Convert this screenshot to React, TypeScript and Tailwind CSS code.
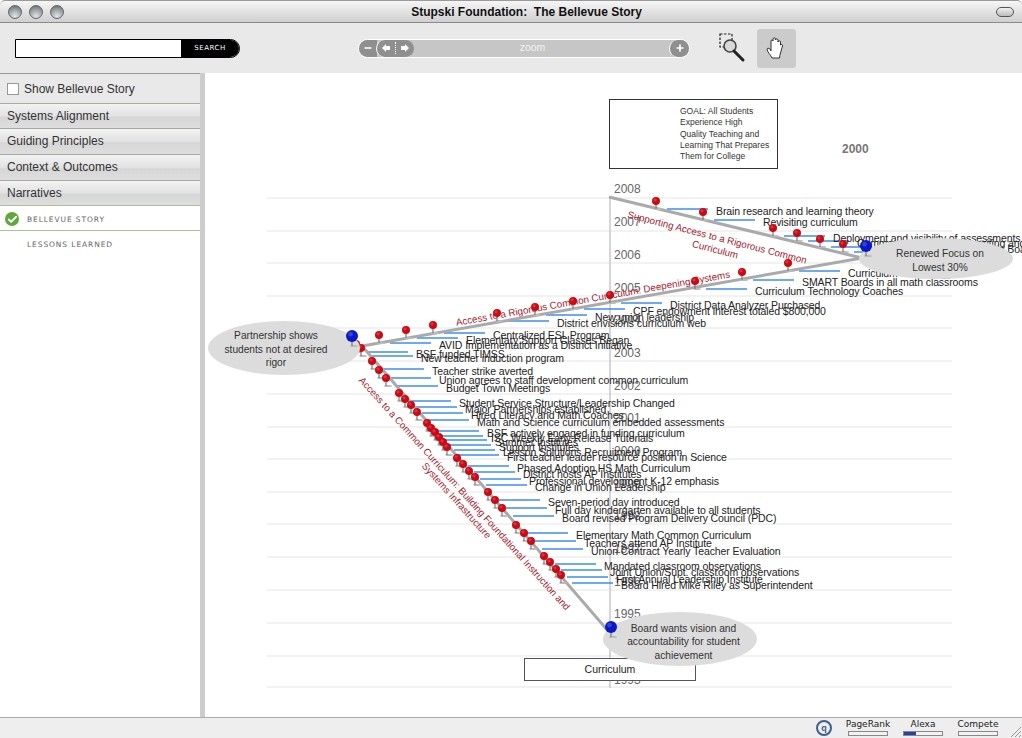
import { Check, Minus, Plus } from "lucide-react"

const gridRows = [198, 231, 263, 296, 328, 361, 394, 427, 459, 492, 524, 557, 590, 623, 656, 687]

const years: [string, number][] = [
  ["2008", 189],
  ["2007", 222],
  ["2006", 255],
  ["2005", 288],
  ["2004", 320],
  ["2003", 353],
  ["2002", 386],
  ["2001", 418],
  ["2000", 451],
  ["1999", 484],
  ["1998", 516],
  ["1997", 549],
  ["1996", 582],
  ["1995", 614],
  ["1993", 680],
]

// pin head x, pin head y, label. connector and label hang off the pin
const events: [number, number, string][] = [
  [656, 201, "Brain research and learning theory"],
  [703, 212, "Revisiting curriculum"],
  [773, 228, "Deployment and visibility of assessments"],
  [797, 233, "Common assessments in writing and rubrics"],
  [820, 239, "Data team review of results Board"],
  [843, 244, "Focus on lowest 30%"],
  [788, 263, "Curriculum Technology"],
  [742, 272, "SMART Boards in all math classrooms"],
  [695, 281, "Curriculum Technology Coaches"],
  [610, 295, "District Data Analyzer Purchased"],
  [573, 301, "CPF endowment interest totaled $800,000"],
  [535, 307, "New union leadership"],
  [497, 313, "District envisions curriculum web"],
  [433, 325, "Centralized ESL Program"],
  [406, 330, "Elementary Support Classes Began"],
  [379, 335, "AVID Implementation as a District Initiative"],
  [356, 344, "BSF funded TIMSS"],
  [361, 348, "New teacher induction program"],
  [372, 361, "Teacher strike averted"],
  [379, 370, "Union agrees to staff development common curriculum"],
  [386, 378, "Budget Town Meetings"],
  [399, 393, "Student Service Structure/Leadership Changed"],
  [405, 399, "Major Partnerships established"],
  [411, 405, "Hired Literacy and Math Coaches"],
  [417, 412, "Math and Science curriculum embedded assessments"],
  [427, 423, "BSF actively engaged in funding curriculum"],
  [431, 428, "ISC Weekly Early Release Tutorials"],
  [435, 432, "Summer Institutes"],
  [439, 437, "Support Institutes"],
  [443, 442, "Lesson Solutions Recruitment Program"],
  [447, 447, "First teacher leader resource position in Science"],
  [457, 458, "Phased Adoption HS Math Curriculum"],
  [463, 464, "District hosts AP Institutes"],
  [469, 471, "Professional development K-12 emphasis"],
  [475, 477, "Change in Union Leadership"],
  [488, 492, "Seven-period day introduced"],
  [495, 500, "Full day kindergarten available to all students"],
  [502, 508, "Board revised Program Delivery Council (PDC)"],
  [516, 525, "Elementary Math Common Curriculum"],
  [524, 533, "Teachers attend AP Institute"],
  [531, 541, "Union Contract Yearly Teacher Evaluation"],
  [544, 556, "Mandated classroom observations"],
  [550, 562, "Joint Union/Supt. classroom observations"],
  [556, 569, "First Annual Leadership Institute"],
  [561, 575, "Board Hired Mike Riley as Superintendent"],
]

const branchTitles: [string, number, number, number][] = [
  ["Supporting Access to a Rigorous Common", 717, 238, 14.5],
  ["Curriculum", 715, 250, 14.5],
  ["Access to a Rigorous Common Curriculum: Deepening Systems", 593, 299, -10],
  ["Access to a Common Curriculum: Building Foundational Instruction and", 464, 494, 48],
  ["Systems Infrastructure", 456, 501, 48],
]

const navRows: [string, string][] = [
  ["Systems Alignment", "h-[25px]"],
  ["Guiding Principles", "h-[26px] pb-[1px]"],
  ["Context & Outcomes", "h-[26px] pb-[1px]"],
  ["Narratives", "h-[25px]"],
]

// chart coordinates below are page pixels, the canvas starts at 205,73
const X0 = 205
const Y0 = 73

function Pin({ x, y, color, r }: { x: number; y: number; color: string; r: number }) {
  return (
    <g>
      <ellipse cx={x + 2} cy={y + r + 4} rx={4} ry={1} fill="#bbbbbb" />
      <line x1={x} y1={y} x2={x} y2={y + r + 4} stroke="#777777" strokeWidth={1.2} />
      <circle cx={x} cy={y} r={r} fill={color} />
      <circle cx={x - r * 0.25} cy={y - r * 0.3} r={r * 0.4} fill="#ffffff" opacity={0.18} />
    </g>
  )
}

function Bubble({ x, y, w, h, lines, inset }: { x: number; y: number; w: number; h: number; lines: string[]; inset: string }) {
  return (
    <div
      className={`absolute flex flex-col items-center justify-center rounded-[50%] bg-[#dcdcdc] text-center text-[10.2px] leading-[13.5px] text-[#333333] ${inset}`}
      style={{ left: x - X0, top: y - Y0, width: w, height: h }}
    >
      {lines.map((line) => (
        <span key={line}>{line}</span>
      ))}
    </div>
  )
}

function MeterBar({ label, fill }: { label: string; fill: number }) {
  return (
    <div className="flex w-10 flex-col items-center">
      <span className="font-['DejaVu_Sans'] text-[9px] leading-[13px] text-[#222222]">{label}</span>
      <div className="h-[5px] w-10 border border-[#888888] bg-[#f2f2f2]">
        <div className="h-full bg-[#2b3fa0]" style={{ width: `${fill}%` }} />
      </div>
    </div>
  )
}

function TrafficLight() {
  return <div className="size-[14px] rounded-full border border-[#666666] bg-[radial-gradient(circle_at_50%_85%,#e2e6ea_0%,#a4a9ae_50%,#5d6367_100%)]" />
}

export default function App() {
  return (
    <div className="flex h-[738px] w-[1022px] flex-col overflow-hidden bg-white font-['Liberation_Sans',Arial,sans-serif]">
      <header className="relative flex h-[23px] shrink-0 items-center justify-center rounded-t-[5px] border-t border-b border-t-[#9a9a9a] border-b-[#8a8a8a] bg-[linear-gradient(#f6f6f6,#cfcfcf)] pl-[31px]">
        <div className="absolute left-[8px] top-[4px] flex gap-[7px]">
          <TrafficLight />
          <TrafficLight />
          <TrafficLight />
        </div>
        <span className="whitespace-pre text-[12px] font-bold text-[#111111]">Stupski Foundation:  The Bellevue Story</span>
        <div className="absolute right-[8px] top-[6px] h-[10px] w-[18px] rounded-full border border-[#555555] bg-[linear-gradient(#f0f0f0,#bbbbbb)]" />
      </header>

      <div className="flex h-[50px] shrink-0 items-center bg-[#e9e9e9]">
        <div className="ml-[15px] flex h-[19px] w-[225px] items-stretch overflow-hidden rounded-r-full border border-black bg-white">
          <input className="min-w-0 flex-1 bg-white" aria-label="Search" />
          <div className="flex w-[58px] items-center justify-center bg-black font-['DejaVu_Sans'] text-[7px] tracking-[0.5px] text-white">SEARCH</div>
        </div>

        <div className="ml-[118px] flex h-[19px] w-[332px] items-center overflow-hidden rounded-full border border-white bg-[#c6c6c6]">
          <div className="flex h-full w-[18px] shrink-0 items-center justify-center bg-[#8f8f8f]">
            <Minus size={10} strokeWidth={4} color="#ffffff" />
          </div>
          <div className="-ml-[1px] flex h-full w-[38px] shrink-0 items-center justify-around rounded-full border-l border-white bg-[#8f8f8f] px-[3px]">
            <svg width="8" height="8" viewBox="0 0 8 8"><path d="M0 4 4 0v2h4v4H4v2z" fill="#ffffff" /></svg>
            <span className="h-[12px] border-l border-dotted border-white" />
            <svg width="8" height="8" viewBox="0 0 8 8"><path d="M8 4 4 0v2H0v4h4v2z" fill="#ffffff" /></svg>
          </div>
          <span className="flex-1 pr-[18px] text-center text-[10.5px] text-[#f2f2f2]">zoom</span>
          <div className="flex h-full w-[20px] shrink-0 items-center justify-center rounded-l-full border-l border-white bg-[#8f8f8f]">
            <Plus size={10} strokeWidth={4} color="#ffffff" />
          </div>
        </div>

        <svg className="ml-[28px]" width="30" height="32" viewBox="0 0 30 32">
          <rect x="2" y="2" width="12" height="13" fill="none" stroke="#222222" strokeWidth="1.2" strokeDasharray="2.5 1.5" />
          <circle cx="12" cy="14" r="6" fill="#d8d8d8" stroke="#444444" strokeWidth="1.6" />
          <path d="M16 19l9 9" stroke="#222222" strokeWidth="3" strokeLinecap="round" />
        </svg>

        <div className="ml-[9px] flex h-[39px] w-[39px] items-center justify-center rounded-[3px] bg-[#cbcbcb]">
          <svg width="22" height="24" viewBox="0 0 22 24">
            <path d="M6 22c-1-3-5-6-5-9 0-1 2-1 3 0l1 2V5c0-1.500 2-1.500 2 0V3c0-1.500 2.500-1.500 2.500 0v1c0-1.500 2.500-1.500 2.500 0v2c0-1.500 2.500-1.500 2.500 0v3c1-1 2.500-.5 2 1l-2 7c-.3 1.500-1 3-1 5z" fill="#ffffff" stroke="#333333" strokeWidth="1" strokeLinejoin="round" />
          </svg>
        </div>
      </div>

      <div className="flex min-h-0 flex-1">
        <aside className="w-[205px] shrink-0 border-r-[5px] border-[#cccccc] bg-white text-[12px] text-[#333333]">
          <div className="flex h-[30px] items-center gap-[5px] border-t border-[#999999] bg-[#e9e9e9] pl-[7px] pt-[1px]">
            <span className="size-[12px] border border-[#999999] bg-white" />
            <span>Show Bellevue Story</span>
          </div>
          {navRows.map(([row, height]) => (
            <div key={row} className={`flex items-center border-t border-[#a5aba0] bg-[linear-gradient(#f2f2f2,#e2e2e2_50%,#d6d6d6_55%,#dedede)] pl-[7px] ${height}`}>
              {row}
            </div>
          ))}
          <div className="relative flex h-[26px] items-center border-y border-y-[#a9c490] pl-[27px] pt-[3px] font-['DejaVu_Sans'] text-[7.5px] tracking-[0.9px] text-[#666666]">
            <span className="absolute left-[5px] top-[6px] flex size-[14px] items-center justify-center rounded-full bg-[#5fa83c]">
              <Check size={11} strokeWidth={4} color="#ffffff" />
            </span>
            BELLEVUE STORY
          </div>
          <div className="flex h-[26px] items-center pl-[27px] pt-[2px] font-['DejaVu_Sans'] text-[7.5px] tracking-[0.9px] text-[#666666]">LESSONS LEARNED</div>
        </aside>

        <main className="relative min-w-0 flex-1 overflow-hidden bg-white">
          <svg className="absolute left-0 top-0" width="817" height="644">
            {gridRows.map((y) => (
              <line key={y} x1={267 - X0} y1={y - Y0} x2={952 - X0} y2={y - Y0} stroke="#eeeeee" strokeWidth={1.5} />
            ))}
            <line x1={610 - X0} y1={198 - Y0} x2={610 - X0} y2={688 - Y0} stroke="#bbbbbb" strokeWidth={1.2} />
            {events.map(([x, y, label]) => (
              <line key={label} x1={x + 11 - X0} y1={y + 8 - Y0} x2={x + 52 - X0} y2={y + 8 - Y0} stroke="#3d8fe8" strokeWidth={1.4} />
            ))}
          </svg>

          {years.map(([year, y]) => (
            <span key={year} className="absolute -translate-y-1/2 text-[12px] text-[#666666]" style={{ left: 614 - X0, top: y - Y0 }}>
              {year}
            </span>
          ))}
          <span className="absolute -translate-y-1/2 text-[12px] font-bold text-[#777777]" style={{ left: 842 - X0, top: 149 - Y0 }}>
            2000
          </span>

          <div className="absolute h-[70px] w-[169px] border border-[#333333] bg-white pl-[70px] pt-[6px] text-[8.5px] leading-[11.3px] text-[#333333]" style={{ left: 609 - X0, top: 99 - Y0 }}>
            GOAL: All Students
            <br />
            Experience High
            <br />
            Quality Teaching and
            <br />
            Learning That Prepares
            <br />
            Them for College
          </div>

          {events.map(([x, y, label]) => (
            <span key={label} className="absolute -translate-y-1/2 whitespace-nowrap text-[10.5px] tracking-[-0.1px] text-[#222222]" style={{ left: x + 60 - X0, top: y + 11 - Y0 }}>
              {label}
            </span>
          ))}

          {branchTitles.map(([title, x, y, angle]) => (
            <span key={title} className="absolute whitespace-nowrap text-[9.8px] text-[#a3212f]" style={{ left: x - X0, top: y - Y0, transform: `translate(-50%, -50%) rotate(${angle}deg)` }}>
              {title}
            </span>
          ))}

          <svg className="absolute left-0 top-0" width="817" height="644">
            <polyline points={`${609 - X0},${197 - Y0} ${862 - X0},${258 - Y0} ${362 - X0},${346 - Y0} ${609 - X0},${632 - Y0}`} fill="none" stroke="#aaaaaa" strokeWidth={3} />
            {events.map(([x, y, label]) => (
              <Pin key={label} x={x - X0} y={y - Y0} color="#cc0a14" r={4} />
            ))}
          </svg>

          <div className="absolute flex h-[23px] w-[172px] items-center justify-center border border-[#555555] bg-white text-[10.5px] text-[#222222]" style={{ left: 524 - X0, top: 658 - Y0 }}>
            Curriculum
          </div>

          <Bubble x={208} y={321} w={152} h={54} lines={["Partnership shows", "students not at desired", "rigor"]} inset="pr-[16px] pt-[3px]" />
          <Bubble x={859} y={238} w={154} h={41} lines={["Renewed Focus on", "Lowest 30%"]} inset="pl-[8px] pt-[4px]" />
          <Bubble x={603} y={612} w={154} h={54} lines={["Board wants vision and", "accountability for student", "achievement"]} inset="pl-[7px] pt-[6px]" />

          <svg className="absolute left-0 top-0" width="817" height="644">
            <Pin x={352 - X0} y={336 - Y0} color="#0a18c8" r={6} />
            <Pin x={866 - X0} y={246 - Y0} color="#0a18c8" r={6} />
            <Pin x={611 - X0} y={627 - Y0} color="#0a18c8" r={6} />
          </svg>
        </main>
      </div>

      <footer className="relative flex h-[21px] shrink-0 items-start justify-end gap-[15px] border-t border-[#aaaaaa] bg-[#eeeeee] pr-[24px]">
        <span className="absolute right-[190px] top-[2px] flex size-[16px] items-center justify-center rounded-full border-[2.5px] border-[#3c5f8c] text-[9px] font-bold leading-none text-[#3c5f8c]">q</span>
        <MeterBar label="PageRank" fill={0} />
        <MeterBar label="Alexa" fill={32} />
        <MeterBar label="Compete" fill={0} />
        <svg className="absolute bottom-0 right-0" width="14" height="14" viewBox="0 0 14 14">
          <path d="M3 13 13 3M7 13l6-6M11 13l2-2" stroke="#999999" strokeWidth="1" />
        </svg>
      </footer>
    </div>
  )
}
